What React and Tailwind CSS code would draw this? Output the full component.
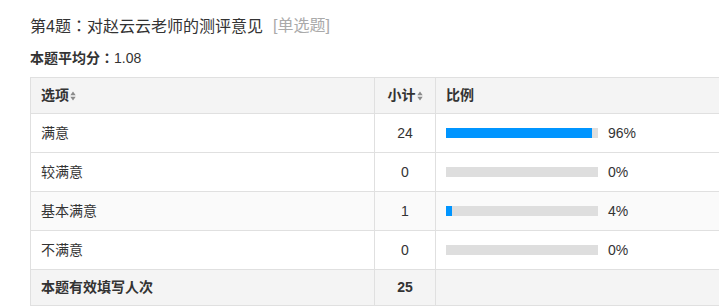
import React from 'react';

const rows = [
    { label: '满意', count: 24, pct: 96, bg: 'bg-white' },
    { label: '较满意', count: 0, pct: 0, bg: 'bg-white' },
    { label: '基本满意', count: 1, pct: 4, bg: 'bg-[#fafafa]' },
    { label: '不满意', count: 0, pct: 0, bg: 'bg-white' },
];

const SortIcon = () => (
    <svg width="6" height="10" viewBox="0 0 6 10" className="inline-block ml-[1px] align-[-1px]">
        <path d="M3 0.5 L5.7 4.2 L0.3 4.2 Z" fill="#8a8a8a" />
        <path d="M3 9.5 L5.7 5.8 L0.3 5.8 Z" fill="#8a8a8a" />
    </svg>
);

// centered full-width colon, like the reference font
const Colon = () => <span style={{ fontFamily: '"Noto Sans CJK TC", sans-serif' }}>：</span>;

const App = () => {
    return (
        <div
            className="w-[719px] h-[308px] overflow-hidden bg-white text-[#333]"
            style={{ fontFamily: '"Liberation Sans", "Noto Sans CJK SC", sans-serif' }}
        >
            <div className="pl-[30px] pt-[15px]">
                <div className="flex items-center h-[22px] text-[16px] leading-[22px]">
                    <span>第4题<Colon />对赵云云老师的测评意见</span>
                    <span className="ml-[10px] text-[#aaa]">[单选题]</span>
                </div>
                <div className="mt-[10px] h-[20px] text-[14px] leading-[20px]">
                    <span className="font-bold">本题平均分<Colon /></span>
                    <span>1.08</span>
                </div>
                <table className="mt-[10px] w-[720px] border-collapse text-[14px] table-fixed">
                    <colgroup>
                        <col className="w-[344px]" />
                        <col className="w-[61px]" />
                        <col />
                    </colgroup>
                    <thead>
                        <tr className="h-[36px] bg-[#f4f4f4]">
                            <th className="border border-[#e0e0e0] pl-[10px] text-left font-bold">
                                选项<SortIcon />
                            </th>
                            <th className="border border-[#e0e0e0] text-center font-bold">
                                小计<SortIcon />
                            </th>
                            <th className="border border-[#e0e0e0] pl-[10px] text-left font-bold">比例</th>
                        </tr>
                    </thead>
                    <tbody>
                        {rows.map((r) => (
                            <tr key={r.label} className={`h-[39px] ${r.bg}`}>
                                <td className="border border-[#e0e0e0] pl-[10px]">{r.label}</td>
                                <td className="border border-[#e0e0e0] text-center">{r.count}</td>
                                <td className="border border-[#e0e0e0] pl-[10px]">
                                    <div className="flex items-center">
                                        <div className="w-[152px] h-[10px] bg-[#dedede]">
                                            <div className="h-full bg-[#0095ff]" style={{ width: `${r.pct}%` }} />
                                        </div>
                                        <span className="ml-[10px]">{r.pct}%</span>
                                    </div>
                                </td>
                            </tr>
                        ))}
                        <tr className="h-[36px] bg-[#f4f4f4] font-bold">
                            <td className="border border-[#e0e0e0] pl-[10px]">本题有效填写人次</td>
                            <td className="border border-[#e0e0e0] text-center">25</td>
                            <td className="border border-[#e0e0e0]"></td>
                        </tr>
                    </tbody>
                </table>
            </div>
        </div>
    );
};

export default App;
